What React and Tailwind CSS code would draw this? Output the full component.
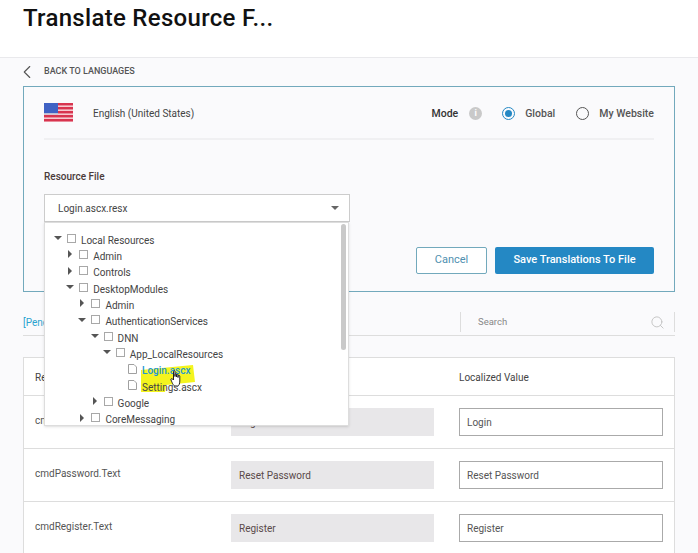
import { ChevronLeft, Search } from 'lucide-react';

const TREE = [
  { depth: 0, name: 'Local Resources', arrow: 'open' },
  { depth: 1, name: 'Admin', arrow: 'closed' },
  { depth: 1, name: 'Controls', arrow: 'closed' },
  { depth: 1, name: 'DesktopModules', arrow: 'open' },
  { depth: 2, name: 'Admin', arrow: 'closed' },
  { depth: 2, name: 'AuthenticationServices', arrow: 'open' },
  { depth: 3, name: 'DNN', arrow: 'open' },
  { depth: 4, name: 'App_LocalResources', arrow: 'open' },
  { depth: 5, name: 'Login.ascx', file: true, active: true },
  { depth: 5, name: 'Settings.ascx', file: true },
  { depth: 3, name: 'Google', arrow: 'closed' },
  { depth: 2, name: 'CoreMessaging', arrow: 'closed' },
];

const ROWS = [
  { key: 'cmdLogin.Text', value: 'Login' },
  { key: 'cmdPassword.Text', value: 'Reset Password' },
  { key: 'cmdRegister.Text', value: 'Register' },
];

function Flag() {
  return (
    <svg width="29" height="19" viewBox="0 0 29 19" className="shrink-0">
      <rect width="29" height="19" fill="#f6c9cf" />
      {[0, 4, 8, 12, 16].map((y) => (
        <rect key={y} y={y} width="29" height="2.4" fill="#d8344f" />
      ))}
      <rect width="14" height="10" fill="#3f62c4" />
      <rect y="10" width="14" height="1.5" fill="#b9bfd6" />
    </svg>
  );
}

function Folder() {
  return (
    <svg width="9" height="9" viewBox="0 0 9 9" className="shrink-0">
      <rect x="0.5" y="0.5" width="8" height="8" fill="#fff" stroke="#a8a8a8" />
    </svg>
  );
}

function FileIcon() {
  return (
    <svg width="9" height="10" viewBox="0 0 9 10" className="shrink-0">
      <path d="M0.5 0.5H6L8.5 3V9.5H0.5Z" fill="#fff" stroke="#a0a0a0" />
    </svg>
  );
}

function TreeRow({ item }) {
  return (
    <div
      className="flex h-[16.33px] items-center"
      style={{ paddingLeft: 9 + item.depth * 12.2 }}
    >
      <span className="flex w-[13px] shrink-0 -translate-y-[2px] items-center">
        {item.arrow === 'open' && (
          <span className="h-0 w-0 border-x-[4px] border-t-[4px] border-x-transparent border-t-[#555]" />
        )}
        {item.arrow === 'closed' && (
          <span className="ml-[2px] h-0 w-0 border-y-[4px] border-l-[4px] border-y-transparent border-l-[#555]" />
        )}
      </span>
      <span className="-translate-y-[2px]">{item.file ? <FileIcon /> : <Folder />}</span>
      <span
        className={`relative ml-[5px] whitespace-nowrap text-[10px] ${
          item.active ? 'font-medium text-[#1f97d4]' : 'text-[#444]'
        }`}
      >
        {item.name}
      </span>
    </div>
  );
}

function ResourceDropdown() {
  return (
    <div className="absolute -left-px top-[27px] z-10 h-[204px] w-[305px] overflow-hidden border border-[#ddd] bg-white pt-[9px] shadow-sm">
      {/* marker the user drew over the screenshot */}
      <svg width="56" height="28" viewBox="0 0 56 28" className="absolute left-[96px] top-[142px]">
        <path d="M0 5L52 0L54 17L25 20L24 27H0Z" fill="#f4f41e" />
      </svg>
      {TREE.map((item, i) => (
        <TreeRow key={i} item={item} />
      ))}
      <svg width="11" height="17" viewBox="0 0 11 17" className="absolute left-[125px] top-[147px]">
        <path
          d="M3.5 7V1.5C3.5 0.5 5 0.5 5 1.5V6.5V4.5C5 3.5 6.5 3.5 6.5 4.5V7V5C6.5 4 8 4 8 5V7.5V6C8 5 9.8 5 9.8 6V11C9.8 13.5 9 16 7.5 16H5C3.5 16 2.5 13.5 1 10C0.5 8.5 2 8 3.5 10Z"
          fill="#fff"
          stroke="#222"
          strokeWidth="1"
        />
      </svg>
      <div className="absolute right-[2px] top-[1px] h-[126px] w-[5px] rounded-full bg-[#c9c9c9]" />
    </div>
  );
}

export default function App() {
  return (
    <div className="h-[553px] w-[698px] overflow-hidden bg-[#fafafc] font-['Roboto',sans-serif] text-[#444]">
      <header className="h-[58px] border-b border-[#e9e9ec] bg-white pl-[23px] pt-[3px]">
        <h1 className="text-[24px] font-medium leading-[30px] tracking-[0.3px] text-[#111]">
          Translate Resource F...
        </h1>
      </header>

      <div className="flex h-[28px] items-center pl-[16px] text-[#555]">
        <ChevronLeft size={22} strokeWidth={1.2} />
        <span className="ml-[6px] text-[9px] font-medium">BACK TO LANGUAGES</span>
      </div>

      <section className="mx-[23px] h-[206px] border border-[#72a9bc] px-[20px]">
        <div className="flex h-[53px] items-center border-b-2 border-[#f0f0f2]">
          <Flag />
          <span className="ml-[20px] mt-[2px] text-[10px] text-[#444]">English (United States)</span>
          <div className="ml-auto mt-[2px] flex items-center text-[10.5px] font-medium">
            <span className="text-[#333]">Mode</span>
            <span className="ml-[11px] flex h-[13px] w-[13px] items-center justify-center rounded-full bg-[#c9c9c9] text-[9px] font-bold text-white">
              i
            </span>
            <span className="ml-[20px] flex h-[13px] w-[13px] items-center justify-center rounded-full border border-[#2488c4]">
              <span className="h-[7px] w-[7px] rounded-full bg-[#2488c4]" />
            </span>
            <span className="ml-[10px] text-[#555]">Global</span>
            <span className="ml-[21px] h-[13px] w-[13px] rounded-full border border-[#555]" />
            <span className="ml-[10px] text-[#555]">My Website</span>
          </div>
        </div>

        <div className="mt-[31px] text-[10px] font-medium leading-[12px] text-[#4a3a3a]">Resource File</div>

        <div className="relative mt-[11px] flex h-[28px] w-[306px] items-center justify-between border border-[#ccc] bg-white pl-[13px] pr-[10px]">
          <span className="text-[10px] text-[#444]">Login.ascx.resx</span>
          <span className="h-0 w-0 border-x-[4px] border-t-[4px] border-x-transparent border-t-[#666]" />
          <ResourceDropdown />
        </div>

        <div className="mt-[25px] flex justify-end gap-[8px] text-[11px]">
          <button className="h-[27px] w-[71px] rounded-[2px] border border-[#72a9bc] bg-white text-[#4f8fb0]">
            Cancel
          </button>
          <button className="h-[27px] w-[159px] rounded-[2px] bg-[#2488c4] font-medium text-white">
            Save Translations To File
          </button>
        </div>
      </section>

      <div className="mx-[23px] mt-[13px] flex h-[31px] items-center justify-between border-b border-[#ddd] pt-[4px]">
        <span className="text-[10px] text-[#2ba3cf]">[Pending]</span>
        <div className="flex h-[20px] w-[215px] items-center justify-between border-x border-[#ddd] pl-[17px] pr-[9px] text-[9.5px] text-[#888]">
          Search
          <Search size={15} strokeWidth={1.5} className="text-[#c2c2c2]" />
        </div>
      </div>

      <div className="mx-[23px] mt-[21px] border border-[#ddd] bg-white">
        <div className="grid h-[38px] grid-cols-[196px_228px_1fr] items-center border-b border-[#ddd] pl-[11px] pt-[2px] text-[10px] text-[#444]">
          <span>Resource Name</span>
          <span>Default Value</span>
          <span>Localized Value</span>
        </div>
        {ROWS.map((row) => (
          <div
            key={row.key}
            className="grid h-[53px] grid-cols-[196px_228px_1fr] items-center border-b border-[#ddd] pl-[11px] text-[10px] text-[#555]"
          >
            <span className="-translate-y-[2px]">{row.key}</span>
            <div className="flex h-[28px] w-[203px] items-center bg-[#e8e7e9] pl-[8px] text-[#5a4a4a]">
              {row.value}
            </div>
            <div className="flex h-[28px] w-[204px] items-center border border-[#aaa] bg-white pl-[7px]">
              {row.value}
            </div>
          </div>
        ))}
      </div>
    </div>
  );
}
